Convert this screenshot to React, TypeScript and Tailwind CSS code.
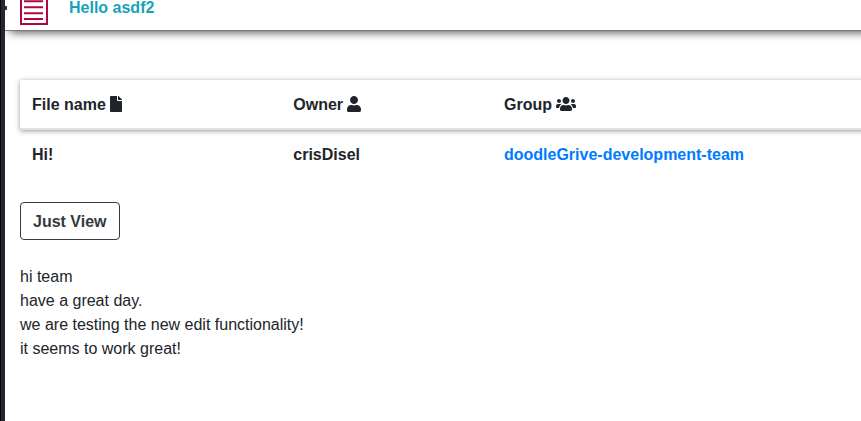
import { FaFile, FaUser, FaUsers } from "react-icons/fa";

export default function App() {
  return (
    <div className="flex h-[421px] w-[861px] overflow-hidden bg-[#23252f] font-['Liberation_Sans',Arial,sans-serif] text-base leading-6 text-[#212529]">
      <div className="relative w-[5px] shrink-0 border-l border-[#080a10]">
        <span className="absolute top-[6px] left-1 z-10 h-1 w-[2px] bg-[#343641]" />
      </div>
      <main className="min-w-0 flex-1 overflow-hidden bg-white">
        <header className="-mr-5 flex h-[31px] border-b border-[#7c7c7c] shadow-[5px_1px_9px_#444]">
          <svg className="ml-[15px] h-[26px] w-7" viewBox="0 0 28 26" fill="none" stroke="#b0083c" strokeWidth="2">
            <path d="M1 0V24H27V0" />
            <path d="M4 1.3H23M4 7.3H23M4 13.3H23M4 19H23" />
          </svg>
          <h1 className="-mt-1 ml-[21px] font-bold text-[#17a2b8]">Hello asdf2</h1>
        </header>
        <section className="-mr-5 mt-[49px] pl-[15px] font-bold">
          <div className="flex h-[50px] items-center border-b-2 border-[#dee2e6] pl-3 shadow-[0_1px_5px_#999]">
            <div className="flex w-[261.3px] items-center gap-1"><span className="pt-px">File name</span><FaFile className="w-3" /></div>
            <div className="flex w-[210.7px] items-center gap-1"><span className="pt-px">Owner</span><FaUser className="w-[14px]" /></div>
            <div className="flex items-center gap-1"><span className="pt-px">Group</span><FaUsers className="size-5" /></div>
          </div>
          <div className="flex h-[50px] items-center pl-3">
            <div className="w-[261.3px]">Hi!</div>
            <div className="w-[210.7px]">crisDisel</div>
            <a className="text-[#007bff]">doodleGrive-development-team</a>
          </div>
        </section>
        <button className="mt-[22px] ml-[15px] block h-[38px] w-[100px] rounded border border-[#343a40] pt-px pl-3 text-left font-bold text-[#343a40]">Just View</button>
        <div className="mt-[25px] ml-[15px]">
          <p>hi team</p><p>have a great day.</p><p>we are testing the new edit functionality!</p><p>it seems to work great!</p>
        </div>
      </main>
    </div>
  );
}
